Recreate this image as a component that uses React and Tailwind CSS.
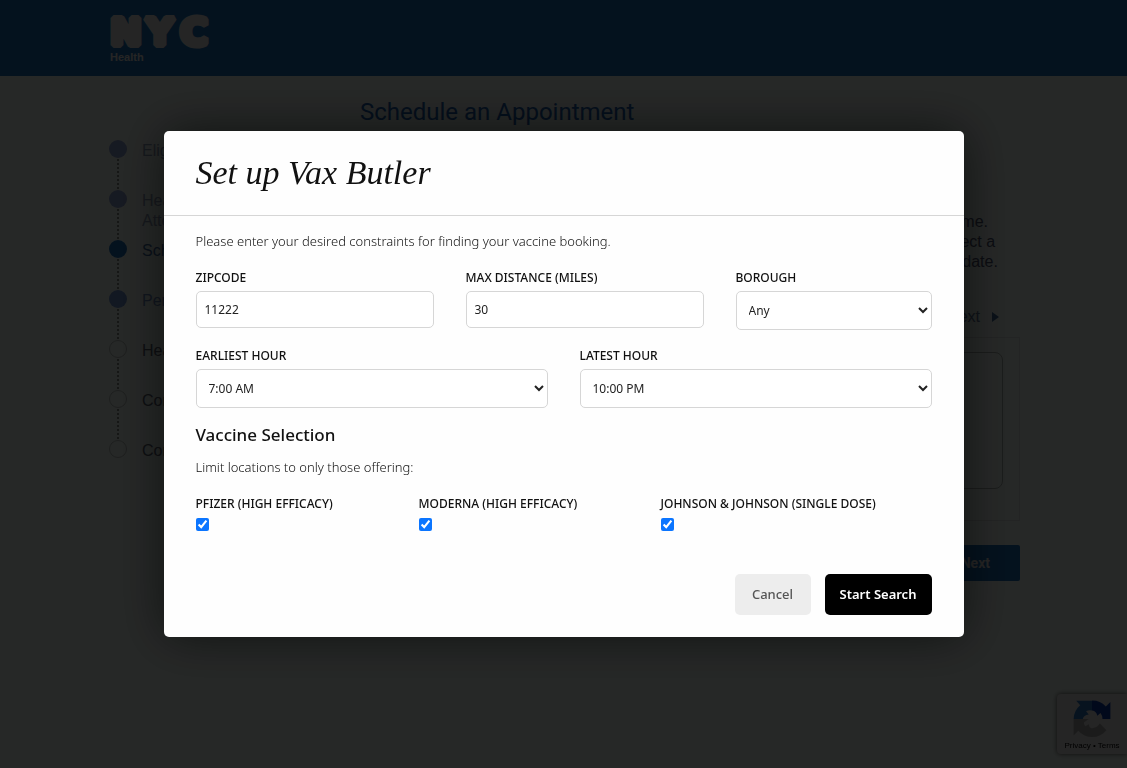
import React from "react";

const steps = [
  { label: "Eligibility", state: "done" },
  { label: "Health Attestation", state: "done" },
  { label: "Schedule", state: "active" },
  { label: "Personal", state: "next" },
  { label: "Health", state: "todo" },
  { label: "Consent", state: "todo" },
  { label: "Confirm", state: "todo" },
];

const dotStyles = {
  done: "bg-[#8c9fd0]",
  active: "bg-[#1c70b8]",
  next: "bg-[#6f93d0]",
  todo: "border border-[#b4bcb8]",
};

const labelStyles = {
  done: "text-[#8c9cb8]",
  active: "text-[#3c68a0]",
  next: "text-[#6c8cc0]",
  todo: "text-[#586070]",
};

function Logo() {
  return (
    <a href="#" className="block w-[100px]" aria-label="NYC Health">
      <svg
        width="100"
        height="34"
        viewBox="0 0 100 34"
        className="block overflow-visible"
        fill="#e6e6e6"
        stroke="#e6e6e6"
        strokeWidth="6"
        strokeLinejoin="bevel"
        fontFamily="DejaVu Sans"
        fontWeight="700"
        fontSize="38"
      >
        <text x="0" y="31">N</text>
        <text x="36" y="31">Y</text>
        <text x="70" y="31">C</text>
      </svg>
      <span className="block text-[11px] leading-[18px] font-bold text-[#e6e6e6]">Health</span>
    </a>
  );
}

function Recaptcha() {
  return (
    <div className="fixed right-0 bottom-[14px] flex h-[60px] w-[70px] flex-col items-center rounded-l-sm bg-[#e4e4e4] pt-1 shadow-[0_0_5px_#555]">
      <svg width="42" height="42" viewBox="0 0 64 64" className="block shrink-0">
        <path fill="#0a3ca8" d="M60 32V6l-7 7A28 28 0 0 0 32 4v15q7 1 8 8l5-4q3 4 3 9z" />
        <path fill="#2f79c0" d="M32 4H8l6 7A28 28 0 0 0 4 32h14q1-6 9-7l-4-5q4-2 9-1z" />
        <path fill="#a9a9a9" d="M4 32v25l7-7a28 28 0 0 0 43-1L44 39q-5 7-12 7-4 0-5-6l-5 3q-3-3-2-6l7-5z" />
      </svg>
      <div className="text-[8px] leading-3 whitespace-nowrap text-black">Privacy • Terms</div>
    </div>
  );
}

function BookingPage() {
  return (
    <div className="min-h-screen bg-[#edf9f3] text-base leading-5">
      <header className="h-[76px] bg-[#1c70b8] pt-[14px]">
        <div className="mx-auto w-full max-w-[907px]">
          <Logo />
        </div>
      </header>
      <div className="mx-auto flex w-full max-w-[913px] pt-5 pl-[2px]">
        <ol className="w-[251px] shrink-0 pt-[44px]">
          {steps.map((step, i) => (
            <li key={step.label} className="flex h-[50px] gap-[15px]">
              <div className="flex w-[18px] flex-col items-center">
                <span className={`size-[18px] shrink-0 rounded-full ${dotStyles[step.state]}`} />
                {i < steps.length - 1 && (
                  <span className="my-px w-0 flex-1 border-l-2 border-dotted border-[#88908c]" />
                )}
              </div>
              <span className={`w-20 pt-px ${labelStyles[step.state]}`}>{step.label}</span>
            </li>
          ))}
        </ol>
        <main className="flex-1">
          <h1 className="font-['Roboto',sans-serif] text-2xl leading-8 text-[#1c60b0]">
            Schedule an Appointment
          </h1>
          <p className="mt-[84px] ml-auto w-20 text-[#4c5470]">
            a time.
            <br />
            select a
            <br />
            on date.
          </p>
          <div className="mt-[35px] flex items-center justify-end gap-3 pr-[21px] text-[#607898]">
            <span>Next</span>
            <span className="border-y-[5px] border-l-[7px] border-y-transparent border-l-[#406898]" />
          </div>
          <div className="mt-[10px] border border-[#d8dedc] px-4 pt-[14px] pb-[31px]">
            <div className="h-[137px] rounded-lg border border-[#a8b0ac]" />
          </div>
          <div className="mt-6 flex justify-end">
            <button
              type="button"
              className="h-9 rounded-xs bg-[#1c70b8] px-[30px] font-['Roboto',sans-serif] text-sm font-bold text-[#e6e6e6]"
            >
              Next
            </button>
          </div>
        </main>
      </div>
      <Recaptcha />
    </div>
  );
}

const fieldStyle = "w-full rounded-[5px] border border-[#d6d6d6] bg-white text-xs text-[#222]";

function Field({ id, label, children }) {
  return (
    <div>
      <label htmlFor={id} className="mb-[3px] block text-xs leading-5 font-medium whitespace-nowrap text-[#111] uppercase">
        {label}
      </label>
      {children}
    </div>
  );
}

function TextField({ id, label, value }) {
  return (
    <Field id={id} label={label}>
      <input id={id} type="text" defaultValue={value} className={`${fieldStyle} h-[37px] px-2`} />
    </Field>
  );
}

function SelectField({ id, label, value }) {
  return (
    <Field id={id} label={label}>
      <select id={id} defaultValue={value} className={`${fieldStyle} h-[39px] pr-px pl-2`}>
        <option>{value}</option>
      </select>
    </Field>
  );
}

function CheckField({ id, label }) {
  return (
    <Field id={id} label={label}>
      <input id={id} type="checkbox" defaultChecked className="mt-1 block size-[13px] accent-[#0b75ff]" />
    </Field>
  );
}

function SetupDialog() {
  return (
    <div className="fixed inset-0 flex items-center justify-center bg-black/84">
      <form
        role="dialog"
        aria-labelledby="dialog-title"
        onSubmit={(e) => e.preventDefault()}
        className="w-full max-w-[800px] rounded-[5px] bg-[#fefefe] font-['Noto_Sans',sans-serif] shadow-[0_0_50px_rgba(0,0,0,0.6)]"
      >
        <div className="border-b border-[#d6d6d6] px-8 pt-5 pb-5">
          <h2
            id="dialog-title"
            className="font-['Liberation_Serif',serif] text-[34px] leading-11 text-[#111] italic"
          >
            Set up Vax Butler
          </h2>
        </div>
        <div className="px-8 pt-[15px] pb-[22px]">
          <p className="text-[13px] leading-5 font-light text-[#111]">
            Please enter your desired constraints for finding your vaccine booking.
          </p>
          <div className="mt-[17px] grid grid-cols-[238fr_238fr_196fr] gap-8">
            <TextField id="zipcode" label="Zipcode" value="11222" />
            <TextField id="distance" label="Max distance (miles)" value="30" />
            <SelectField id="borough" label="Borough" value="Any" />
          </div>
          <div className="mt-4 grid grid-cols-2 gap-8">
            <SelectField id="earliest" label="Earliest hour" value="7:00 AM" />
            <SelectField id="latest" label="Latest hour" value="10:00 PM" />
          </div>
          <h3 className="mt-[15px] text-[17px] leading-6 font-medium text-[#111]">Vaccine Selection</h3>
          <p className="mt-[10px] text-[13px] leading-5 font-light text-[#111]">
            Limit locations to only those offering:
          </p>
          <div className="mt-[17px] grid grid-cols-[223fr_242fr_271fr]">
            <CheckField id="pfizer" label="Pfizer (high efficacy)" />
            <CheckField id="moderna" label="Moderna (high efficacy)" />
            <CheckField id="johnson" label="Johnson & Johnson (single dose)" />
          </div>
          <div className="mt-[43px] flex justify-end gap-[14px] text-[13px]">
            <button type="button" className="h-[41px] w-[76px] rounded-[5px] bg-[#ededed] font-medium text-[#555]">
              Cancel
            </button>
            <button type="submit" className="h-[41px] w-[107px] rounded-[5px] bg-black font-semibold text-white">
              Start Search
            </button>
          </div>
        </div>
      </form>
    </div>
  );
}

export default function App() {
  return (
    <div className="font-['Liberation_Sans',sans-serif]">
      <BookingPage />
      <SetupDialog />
    </div>
  );
}
